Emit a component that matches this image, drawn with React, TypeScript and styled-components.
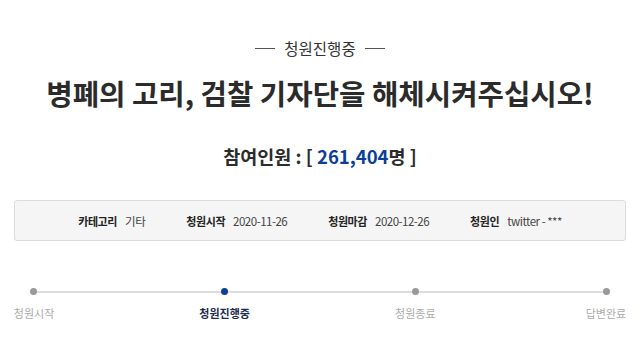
import styled, { createGlobalStyle } from "styled-components";

const GlobalStyle = createGlobalStyle`
  html, body {
    margin: 0;
    padding: 0;
    background: #ffffff;
  }
  body {
    font-family: "Noto Sans CJK KR", "Noto Sans", sans-serif;
    color: #333333;
  }
`

const Page = styled("div")`
  width: 640px;
  height: 360px;
  box-sizing: border-box;
  padding: 37px 14px 0 14px;
  display: flex;
  flex-direction: column;
  align-items: center;
`

const Status = styled("div")`
  display: flex;
  align-items: center;
  gap: 9px;
  font-size: 15.5px;
  line-height: 22px;
  color: #333333;

  &::before, &::after {
    content: "";
    display: block;
    width: 20px;
    height: 1px;
    background: #555555;
  }
`

const Title = styled("h1")`
  margin: 14px 0 0 0;
  font-size: 28.7px;
  line-height: 40px;
  font-weight: 700;
  color: #2b2b2b;
  white-space: nowrap;
`

const Count = styled("div")`
  margin-top: 29px;
  font-size: 18.5px;
  line-height: 28px;
  font-weight: 700;
  color: #2b2b2b;
`

const Number = styled("span")`
  color: #0b3e96;
`

const InfoBox = styled("div")`
  align-self: stretch;
  margin-top: 30px;
  height: 41px;
  box-sizing: border-box;
  background: #f5f5f5;
  border: 1px solid #dcdcdc;
  border-radius: 3px;
  display: flex;
  justify-content: center;
  align-items: center;
  gap: 41px;
`

const InfoItem = styled("div")`
  display: flex;
  align-items: baseline;
  gap: 8px;
  white-space: nowrap;
`

const InfoLabel = styled("span")`
  font-size: 11px;
  font-weight: 700;
  letter-spacing: -0.4px;
  color: #222222;
`

const InfoValue = styled("span")`
  color: #444444;
  font-size: 11.5px;
  letter-spacing: -0.5px;
`

const Progress = styled("div")`
  align-self: stretch;
  margin-top: 47px;
`

const DotRow = styled("div")`
  display: flex;
  align-items: center;
  padding: 0 16px 0 16px;
`

const Dot = styled("div")<{ $active?: boolean }>`
  width: 7px;
  height: 7px;
  border-radius: 50%;
  flex: none;
  background: ${(p) => (p.$active ? "#0b3e96" : "#999999")};
`

const Connector = styled("div")`
  flex: 1;
  height: 2px;
  background: #dddddd;
`

const LabelRow = styled("div")`
  display: flex;
  justify-content: space-between;
  margin-top: 9px;
`

const StepLabel = styled("div")<{ $active?: boolean }>`
  width: 40px;
  display: flex;
  justify-content: center;
  white-space: nowrap;
  font-size: 11px;
  line-height: 18px;
  font-weight: ${(p) => (p.$active ? 700 : 400)};
  color: ${(p) => (p.$active ? "#1c2b4f" : "#aaaaaa")};
`

const steps = ["청원시작", "청원진행중", "청원종료", "답변완료"];
const current = 1;

const App = () => {
  return (
    <Page>
      <GlobalStyle />
      <Status>청원진행중</Status>
      <Title>병폐의 고리, 검찰 기자단을 해체시켜주십시오!</Title>
      <Count>
        참여인원 : [ <Number>261,404</Number>명 ]
      </Count>
      <InfoBox>
        <InfoItem>
          <InfoLabel>카테고리</InfoLabel>
          <InfoValue>기타</InfoValue>
        </InfoItem>
        <InfoItem>
          <InfoLabel>청원시작</InfoLabel>
          <InfoValue>2020-11-26</InfoValue>
        </InfoItem>
        <InfoItem>
          <InfoLabel>청원마감</InfoLabel>
          <InfoValue>2020-12-26</InfoValue>
        </InfoItem>
        <InfoItem>
          <InfoLabel>청원인</InfoLabel>
          <InfoValue>twitter - ***</InfoValue>
        </InfoItem>
      </InfoBox>
      <Progress>
        <DotRow>
          {steps.map((s, i) => (
            <>
              {i > 0 && <Connector key={s + "-line"} />}
              <Dot key={s} $active={i === current} />
            </>
          ))}
        </DotRow>
        <LabelRow>
          {steps.map((s, i) => (
            <StepLabel key={s} $active={i === current}>
              {s}
            </StepLabel>
          ))}
        </LabelRow>
      </Progress>
    </Page>
  );
};

export default App;
